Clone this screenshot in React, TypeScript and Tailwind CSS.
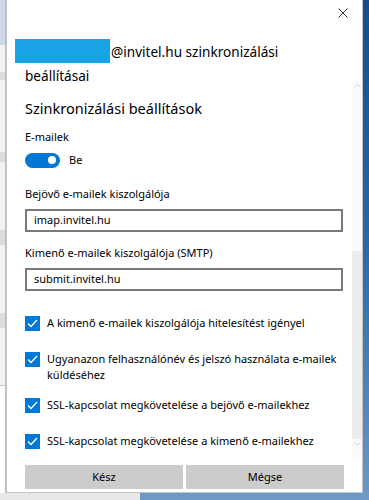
import React from "react";

const font = { fontFamily: '"Noto Sans", "Segoe UI", sans-serif' };

function Check() {
  return (
    <div className="w-[15px] h-[15px] bg-[#0078d7] flex items-center justify-center shrink-0 mt-[1px]">
      <svg width="11" height="9" viewBox="0 0 11 9">
        <path d="M1 4.5 L4 7.5 L10 1" stroke="white" strokeWidth="1.3" fill="none" />
      </svg>
    </div>
  );
}

function CheckRow({ text, className }: { text: string; className?: string }) {
  return (
    <div className={"flex gap-[7px] " + (className ?? "")}>
      <Check />
      <div className="text-[11px] leading-[16px] text-black">{text}</div>
    </div>
  );
}

export default function App() {
  return (
    <div className="w-[369px] h-[500px] overflow-hidden flex flex-col bg-[#6b98c4]" style={font}>
      <div className="flex h-[493px]">
        {/* background app strip */}
        <div className="w-[6px] flex flex-col bg-[#f2f2f2] border-r border-[#bdbdbd]">
          <div className="h-[45px] bg-[#cbd8e6]" />
          <div className="h-[27px]" />
          <div className="h-[8px] bg-[#dcdcdc]" />
          <div className="h-[72px]" />
          <div className="h-[10px] bg-[#dcdcdc]" />
          <div className="h-[68px]" />
          <div className="h-[15px] bg-[#dcdcdc]" />
          <div className="h-[68px]" />
          <div className="h-[15px] bg-[#dcdcdc]" />
          <div className="h-[57px]" />
          <div className="h-[1px] bg-[#c8c8c8]" />
          <div className="flex-1 bg-white" />
        </div>

        {/* dialog */}
        <div className="w-[357px] bg-white border-x border-b border-[#c4c4c4] relative flex flex-col px-[18px]">
          <div className="absolute top-[7px] right-[13px] w-[12px] h-[12px]">
            <svg width="12" height="12" viewBox="0 0 12 12">
              <path d="M1.5 1.5 L10.5 10.5 M10.5 1.5 L1.5 10.5" stroke="#333" strokeWidth="1" />
            </svg>
          </div>

          {/* scrollbar */}
          <div className="absolute right-0 top-[81px] h-[376px] w-[10px] bg-[#fafafa] flex flex-col items-center">
            <div className="h-[10px] flex items-center">
              <svg width="7" height="4" viewBox="0 0 7 4"><path d="M0.5 3.5 L3.5 0.5 L6.5 3.5" stroke="#d4d4d4" fill="none" /></svg>
            </div>
            <div className="h-[160px]" />
            <div className="w-full h-[188px] bg-[#ececec]" />
            <div className="h-[10px] flex items-center">
              <svg width="7" height="4" viewBox="0 0 7 4"><path d="M0.5 0.5 L3.5 3.5 L6.5 0.5" stroke="#d4d4d4" fill="none" /></svg>
            </div>
          </div>

          <div className="mt-[37px] -ml-[10px] text-[13.6px] leading-[24px] text-black">
            <div className="flex items-center">
              <div className="w-[95px] h-[24px] bg-[#18a3e6]" />
              <span className="ml-[1px] mt-[3px]">@invitel.hu szinkronizálási</span>
            </div>
            <div className="ml-[10px] leading-[23px]">beállításai</div>
          </div>

          <div className="mt-[11px] text-[14.5px] leading-[20px] text-black">Szinkronizálási beállítások</div>

          <div className="mt-[10px] text-[11px] leading-[18px] text-black">E-mailek</div>
          <div className="mt-[6px] flex items-center gap-[9px]">
            <div className="w-[35px] h-[15px] rounded-full bg-[#0078d7] flex items-center justify-end pr-[4px]">
              <div className="w-[8px] h-[8px] rounded-full bg-white" />
            </div>
            <span className="text-[11px] leading-[16px] text-black">Be</span>
          </div>

          <div className="mt-[17px] text-[11px] leading-[18px] text-black">Bejövő e-mailek kiszolgálója</div>
          <div className="mt-[6px] h-[23px] w-[318px] border-2 border-[#7a7a7a] flex items-center pl-[7px] text-[11px] text-black">
            imap.invitel.hu
          </div>

          <div className="mt-[12px] text-[11px] leading-[18px] text-black">Kimenő e-mailek kiszolgálója (SMTP)</div>
          <div className="mt-[6px] h-[23px] w-[318px] border-2 border-[#7a7a7a] flex items-center pl-[7px] text-[11px] text-black">
            submit.invitel.hu
          </div>

          <CheckRow className="mt-[24px]" text="A kimenő e-mailek kiszolgálója hitelesítést igényel" />
          <CheckRow className="mt-[20px]" text="Ugyanazon felhasználónév és jelszó használata e-mailek küldéséhez" />
          <CheckRow className="mt-[14px]" text="SSL-kapcsolat megkövetelése a bejövő e-mailekhez" />
          <CheckRow className="mt-[20px]" text="SSL-kapcsolat megkövetelése a kimenő e-mailekhez" />

          <div className="mt-[16px] flex gap-[3px]">
            <div className="w-[158px] h-[24px] bg-[#cccccc] flex items-center justify-center text-[11px] text-black">Kész</div>
            <div className="w-[158px] h-[24px] bg-[#cccccc] flex items-center justify-center text-[11px] text-black">Mégse</div>
          </div>
        </div>

        <div className="flex-1 bg-gradient-to-b from-[#164d89] via-[#2a68a6] to-[#6a98c4]" />
      </div>
      <div className="h-[7px] flex">
        <div className="w-[140px] bg-[#e8e8e8]" />
        <div className="flex-1 bg-[#6c99c5]" />
      </div>
    </div>
  );
}
